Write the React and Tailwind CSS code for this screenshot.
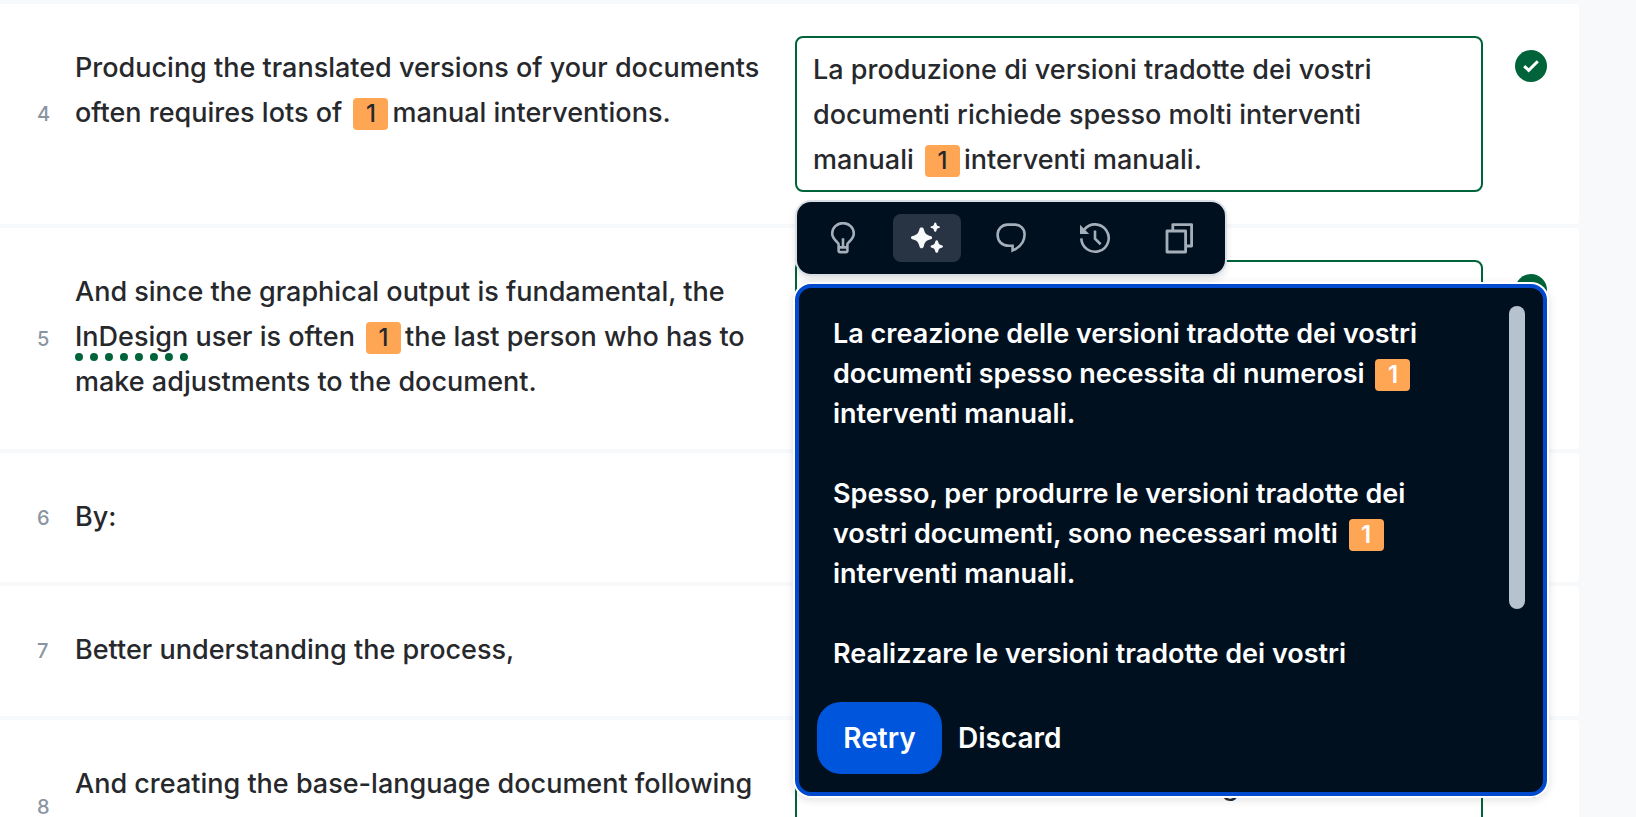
function Tag({ children }) {
  return (
    <span className="mx-1 mb-0.5 inline-flex h-8 w-[35px] items-center justify-center rounded bg-[#ffa654] align-middle text-2xl leading-8">
      {children}
    </span>
  );
}

function StatusCheck() {
  return (
    <svg viewBox="0 0 32 32" className="mt-3.5 ml-8 size-8 shrink-0" role="img" aria-label="Confirmed">
      <circle cx="16" cy="16" r="16" fill="#00633a" />
      <path d="M9.2 16.1 L13.7 20.4 L22.8 11.2" fill="none" stroke="#fff" strokeWidth="3" />
    </svg>
  );
}

function BulbIcon() {
  return (
    <svg viewBox="0 0 32 32" className="size-8" fill="none" stroke="currentColor" strokeWidth="2.6">
      <path d="M11.6 24.5 V22.5 C11.6 20.2 5.2 17.5 5.2 11.5 A10.8 10.4 0 0 1 26.8 11.5 C26.8 17.5 20.4 20.2 20.4 22.5 V28.5 A1.6 1.6 0 0 1 18.8 30.1 H13.2 A1.6 1.6 0 0 1 11.6 28.5 Z" />
      <path d="M11.6 25.4 H20.4 M16 16.2 V25" />
    </svg>
  );
}

function SparkleIcon() {
  return (
    <svg viewBox="0 0 32 32" className="size-8" fill="currentColor">
      <path d="M10.5 5.4 C11.6 5.4 12.4 5.8 12.7 6.9 C13.9 11.4 15.2 12.8 19.7 14 C21.6 14.5 21.6 16.8 19.7 17.3 C15.2 18.5 13.9 19.9 12.7 24.4 C12.4 25.5 11.6 26.3 10.5 26.3 C9.4 26.3 8.8 25.5 8.5 24.4 C7.3 19.9 6 18.5 1.4 17.3 C-0.5 16.8 -0.5 14.5 1.4 14 C6 12.8 7.3 11.4 8.5 6.9 C8.8 5.8 9.4 5.4 10.5 5.4 Z" />
      <path d="M24.2 .5 C25.2 .5 25.3 1.4 25.5 2.2 C25.9 3.6 26.3 3.9 27.9 4.3 C29.3 4.6 29.3 5.8 27.9 6.1 C26.3 6.5 25.9 6.8 25.5 8.4 C25.2 10.1 23.3 10.1 23 8.4 C22.6 6.8 22.1 6.5 20.5 6.1 C19.2 5.8 19.2 4.6 20.5 4.3 C22.1 3.9 22.6 3.6 23 2.2 C23.2 1.4 23.4 .5 24.2 .5 Z" />
      <path d="M25.7 18.2 C26.7 18.2 27 19 27.2 20 C27.8 22.2 28.3 22.7 30.7 23.3 C32.4 23.8 32.4 25.2 30.7 25.7 C28.3 26.3 27.8 26.9 27.2 29.2 C26.8 31.3 24.7 31.3 24.2 29.2 C23.6 26.9 23.1 26.3 20.8 25.7 C19.1 25.2 19.1 23.8 20.8 23.3 C23.1 22.7 23.6 22.2 24.2 20 C24.4 19 24.8 18.2 25.7 18.2 Z" />
    </svg>
  );
}

function CommentIcon() {
  return (
    <svg viewBox="0 0 32 32" className="size-8" fill="none" stroke="currentColor" strokeWidth="2.6">
      <path d="M12.6 2.6 H20 A9.6 9.6 0 0 1 29.6 12.2 C29.6 20 25 25.2 17.6 28.4 V23.8 H14 C7 23.8 2.6 19.4 2.6 12.8 A10 10 0 0 1 12.6 2.6 Z" />
    </svg>
  );
}

function HistoryIcon() {
  return (
    <svg viewBox="0 0 32 32" className="size-8" fill="none" stroke="currentColor" strokeWidth="2.6">
      <path d="M2.3 16.4 A13.7 13.7 0 1 0 5.2 7.6" />
      <path d="M1 2.8 V12 H10.2 Z" fill="currentColor" stroke="none" />
      <path d="M16 8.6 V16.8 L21.6 22.2" />
    </svg>
  );
}

function CopyIcon() {
  return (
    <svg viewBox="0 0 32 32" className="size-8" fill="none" stroke="currentColor" strokeWidth="2.8" strokeLinejoin="round">
      <path d="M4 9 H22.6 V30 H4 Z" />
      <path d="M9.8 8.5 V2.6 H28.6 V24 H23" />
    </svg>
  );
}

const tools = [
  { name: "Suggestions", Icon: BulbIcon },
  { name: "AI alternatives", Icon: SparkleIcon, active: true },
  { name: "Comments", Icon: CommentIcon },
  { name: "History", Icon: HistoryIcon },
  { name: "Copy source", Icon: CopyIcon },
];

function Toolbar() {
  return (
    <div
      role="toolbar"
      aria-label="Segment tools"
      className="absolute top-[166px] left-0.5 z-20 flex gap-4 rounded-[14px] bg-[#00101f] p-3 shadow-[0_0_0_2px_#d9dfe5,0_4px_8px_rgba(0,16,31,0.16)]"
    >
      {tools.map(({ name, Icon, active }) => (
        <button
          key={name}
          type="button"
          aria-label={name}
          className={
            active
              ? "flex h-12 w-[68px] items-center justify-center rounded-lg bg-[#283444] text-[#f8f9fb]"
              : "flex h-12 w-[68px] items-center justify-center rounded-lg text-[#a5afba]"
          }
        >
          <Icon />
        </button>
      ))}
    </div>
  );
}

function AlternativesPanel() {
  return (
    <div className="absolute top-[248px] right-0 left-0 z-10 flex flex-col gap-4 rounded-2xl border-4 border-[#004acf] bg-[#00101f] p-[18px] font-semibold text-white shadow-[0_0_0_2px_#fff,0_2px_8px_2px_rgba(0,16,31,0.12)]">
      <div className="flex h-[380px] items-start justify-between overflow-hidden">
        <div className="flex w-[620px] flex-col gap-10 pt-2 pl-4 leading-10">
          <p>
            La creazione delle versioni tradotte dei vostri documenti spesso necessita di numerosi <Tag>1</Tag>{" "}
            interventi manuali.
          </p>
          <p>
            Spesso, per produrre le versioni tradotte dei vostri documenti, sono necessari molti <Tag>1</Tag>{" "}
            interventi manuali.
          </p>
          <p>Realizzare le versioni tradotte dei vostri</p>
        </div>
        <div className="h-[303px] w-4 rounded-full bg-[#b6c2ce]" />
      </div>
      <div className="flex gap-4 text-[28px]">
        <button type="button" className="h-[72px] w-[125px] rounded-3xl bg-[#0055dd]">
          Retry
        </button>
        <button type="button" className="h-[72px]">
          Discard
        </button>
      </div>
    </div>
  );
}

const segments = [
  {
    id: 4,
    source: (
      <>
        Producing the translated versions of your documents often requires lots of <Tag>1</Tag>manual interventions.
      </>
    ),
    target: (
      <>
        La produzione di versioni tradotte dei vostri documenti richiede spesso molti interventi manuali <Tag>1</Tag>
        interventi manuali.
      </>
    ),
    size: "min-h-[156px]",
    open: true,
  },
  {
    id: 5,
    source: (
      <>
        And since the graphical output is fundamental, the{" "}
        <span className="border-b-8 border-dotted border-[#00633a]">InDesign</span> user is often <Tag>1</Tag>the last
        person who has to make adjustments to the document.
      </>
    ),
    target: (
      <>
        E poiché l’output grafico è fondamentale, l’utente di InDesign è spesso <Tag>1</Tag>l’ultima persona
      </>
    ),
    size: "min-h-[157px]",
  },
  { id: 6, source: "By:", target: "Di:", size: "min-h-[65px]" },
  {
    id: 7,
    source: "Better understanding the process,",
    target: "Comprendere meglio il processo,",
    size: "min-h-[66px]",
  },
  {
    id: 8,
    source: "And creating the base-language document following some precise norms.",
    target: "E creando il documento nella lingua di base seguendo alcune norme precise.",
    size: "min-h-[110px]",
  },
];

function Segment({ id, source, target, size, open }) {
  return (
    <article className="flex rounded-r bg-white py-8 pr-8">
      <div className="flex w-[75px] shrink-0 items-center pl-[37px] text-xl text-[#8b95a1]">{id}</div>
      <p className="min-w-0 flex-1 pt-[9px]">{source}</p>
      <div className="relative ml-8 flex min-w-0 flex-[1_1_64px] items-start">
        <div
          role="textbox"
          aria-label={`Translation of segment ${id}`}
          className={`min-w-0 flex-1 rounded-lg border-2 border-[#00633a] px-4 pt-[9px] pb-[7px] ${size}`}
        >
          {target}
        </div>
        <StatusCheck />
        {open && <Toolbar />}
        {open && <AlternativesPanel />}
      </div>
    </article>
  );
}

export default function App() {
  return (
    <main className="flex h-screen flex-col gap-1 overflow-hidden bg-[#f8f9fb] pt-1 pr-[57px] font-['Inter',sans-serif] text-[27px] leading-[45px] font-[450] text-[#26282c]">
      {segments.map((segment) => (
        <Segment key={segment.id} {...segment} />
      ))}
    </main>
  );
}
